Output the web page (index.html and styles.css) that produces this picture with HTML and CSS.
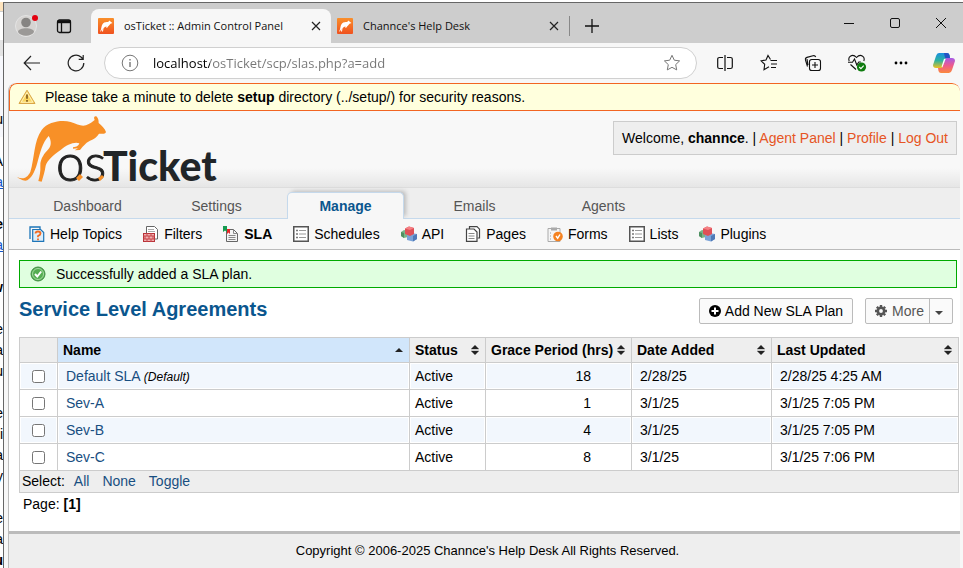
FILE: index.html
```html
<!DOCTYPE html>
<html lang="en">
<head>
<meta charset="utf-8">
<title>osTicket :: Admin Control Panel</title>
<link rel="stylesheet" href="styles.css">
</head>
<body>
<svg class="defs" aria-hidden="true">
  <defs>
    <linearGradient id="gOrange" x1="0" y1="0" x2="0" y2="1"><stop offset="0" stop-color="#f98f2b"/><stop offset="1" stop-color="#f0521f"/></linearGradient>
    <linearGradient id="gBlue" x1="0" y1="0" x2="0" y2="1"><stop offset="0" stop-color="#1a8fe0"/><stop offset=".5" stop-color="#2bb3a0"/><stop offset="1" stop-color="#f0c020"/></linearGradient>
    <linearGradient id="gPink" x1="0" y1="0" x2="0" y2="1"><stop offset="0" stop-color="#a45be8"/><stop offset=".5" stop-color="#ee5a8c"/><stop offset="1" stop-color="#fb8a3c"/></linearGradient>
    <symbol id="fav" viewBox="0 0 16 16"><rect width="16" height="16" rx="1" fill="url(#gOrange)"/><path d="M2 13.500C3.500 12 3 8 5 5.500 6.500 3.800 8.500 4.200 10 4l1.800-1.600.6 1.200L14.500 5l-2 .8C11.500 7.500 10 8 9.500 9.500L8 9.800l.6-1.300C7 8.500 6 9.500 5.500 10.500L5 13.500H4l.3-3C3.800 12 3.300 13.700 2 13.500z" fill="#fff"/></symbol>
    <symbol id="x" viewBox="0 0 12 12"><path d="M2 2l8 8M10 2l-8 8" fill="none" stroke="#222" stroke-width="1.200"/></symbol>
    <symbol id="list" viewBox="0 0 16 16"><rect x=".75" y=".75" width="14.500" height="14.500" fill="#fff" stroke="#555" stroke-width="1.500"/><path d="M6 4.500h7M6 8h7M6 11.500h7" stroke="#999"/><path d="M3 4.500h2M3 8h2M3 11.500h2" stroke="#777" stroke-width="1.500"/></symbol>
    <symbol id="blocks" viewBox="0 0 16 16"><path d="M0 6l3-2 4 1v6l-4 1-3-2z" fill="#7ab58a"/><path d="M0 6l3 1v5l-3-2z" fill="#4f9062"/><path d="M6 9l4-2 6 1v5l-4 2.500L6 14z" fill="#7ba3d8"/><path d="M12 10l4-2v5l-4 2.500z" fill="#4f7ab8"/><path d="M4 2.500L8 .5l5 1.500v6l-4 2-5-2z" fill="#df5158"/><path d="M4 2.500L8 .5 13 2 9 4z" fill="#f58084"/></symbol>
    <symbol id="sort" viewBox="0 0 8 10"><path d="M4 0l4 4H0zM4 10l4-4H0z" fill="#222"/><path d="M0 5h8" stroke="#aaa"/></symbol>
  </defs>
</svg>
<div class="desktop">
  <aside class="backdrop" aria-hidden="true">
    <p>u</p><p></p><p>A</p><p class="link">a</p><p></p><p class="bold">e</p><p class="link">a</p><p></p><p class="bold">w</p><p></p><p>e</p><p>a</p><p>u</p><p></p><p>e</p><p>i</p><p>a</p><p>y</p><p></p><p>e</p><p>a</p><p class="bold">u</p>
  </aside>
  <div class="window">
    <div class="tabbar">
      <button class="avatar" aria-label="Profile"><svg width="22" height="22" viewBox="0 0 22 22"><circle cx="11" cy="11" r="10.500" fill="#d6d4d2" stroke="#e4e4e4"/><circle cx="11" cy="7.500" r="4.800" fill="#868482"/><path d="M3 17c0-5 16-5 16 0-3 5-13 5-16 0z" fill="#9b9997"/><circle cx="20" cy="3" r="3" fill="#e3000f"/></svg></button>
      <button class="panes" aria-label="Tab actions"><svg width="16" height="16" viewBox="0 0 16 16" fill="none" stroke="#111" stroke-width="1.300"><rect x="1.500" y="2" width="13" height="12.500" rx="2"/><path d="M1.500 3.700h13" stroke-width="3"/><path d="M5.500 4v10"/></svg></button>
      <div class="tab active"><svg class="i16"><use href="#fav"/></svg><span>osTicket :: Admin Control Panel</span><button aria-label="Close tab"><svg width="12" height="12"><use href="#x"/></svg></button></div>
      <div class="tab"><svg class="i16"><use href="#fav"/></svg><span>Channce's Help Desk</span><button aria-label="Close tab"><svg width="12" height="12"><use href="#x"/></svg></button></div>
      <button class="newtab" aria-label="New tab"><svg width="14" height="14"><path d="M7 0v14M0 7h14" stroke="#111" stroke-width="1.300"/></svg></button>
      <div class="wincontrols">
        <button aria-label="Minimize"><svg width="10" height="10"><path d="M0 5.500h10" stroke="#111"/></svg></button>
        <button aria-label="Maximize"><svg width="10" height="10"><rect x=".5" y=".5" width="9" height="9" rx="1.500" fill="none" stroke="#111"/></svg></button>
        <button aria-label="Close"><svg width="12" height="12" viewBox="0 0 12 12"><path d="M1 1l10 10M11 1L1 11" stroke="#111"/></svg></button>
      </div>
    </div>
    <div class="toolbar">
      <button class="navbtn" aria-label="Back"><svg width="18" height="16" viewBox="0 0 18 16" fill="none" stroke="#222" stroke-width="1.200"><path d="M17 8H1.500M8 1L1.200 8 8 15"/></svg></button>
      <button class="navbtn" aria-label="Refresh"><svg width="18" height="18" viewBox="0 0 18 18" fill="none" stroke="#222" stroke-width="1.200"><path d="M16.800 9A7.800 7.800 0 1 1 14 3l2 2M16.200 1v4.300h-4.500"/></svg></button>
      <div class="address">
        <svg width="18" height="18" viewBox="0 0 18 18" fill="none" stroke="#777"><circle cx="9" cy="9" r="7.800"/><path d="M9 8v5M9 5v1.500" stroke-width="1.400"/></svg>
        <input aria-label="Address" value="localhost/osTicket/scp/slas.php?a=add">
        <button aria-label="Add to favorites"><svg width="18" height="18" viewBox="0 0 18 18" fill="none" stroke="#777"><path d="M9 1.300l2.300 4.900 5.300.7-3.900 3.700 1 5.300L9 13.300l-4.700 2.600 1-5.300L1.400 6.900l5.300-.7z"/></svg></button>
      </div>
      <div class="tools">
        <button aria-label="Split screen"><svg width="16" height="16" viewBox="0 0 16 16" fill="none" stroke="#111" stroke-width="1.200"><path d="M6 2.500H2.500Q.7 2.500.7 4v8q0 1.500 1.800 1.500H6M10 2.500h3.500q1.800 0 1.800 1.500v8q0 1.500-1.800 1.500H10M8 0v16"/></svg></button>
        <button aria-label="Favorites"><svg width="18" height="18" viewBox="0 0 18 18" fill="none" stroke="#111" stroke-width="1.100"><path d="M10.500 5.500L8 1.500 6 6l-5 .8 3.700 3.500L4 15.800l5-3M10.500 6.500H17M11 10h6M11 13.500h5"/></svg></button>
        <button aria-label="Collections"><svg width="18" height="18" viewBox="0 0 18 18" fill="none" stroke="#111" stroke-width="1.100"><path d="M3.500 12.500L1.500 6Q1 4 3 3.400L9 1.700q2-.5 2.700 1.300M4 11L3 5"/><rect x="5.500" y="5.500" width="11" height="11" rx="2.300"/><path d="M11 8v6M8 11h6"/></svg></button>
        <button aria-label="Browser essentials"><svg width="20" height="18" viewBox="0 0 20 18" fill="none" stroke="#111" stroke-width="1.100"><path d="M2.200 7C.5 2.500 5.500-.8 9.500 3.500 13.500-.8 18.500 2.500 16.800 7M1 8.200h4.500l2-3.200 2.300 6 2-3h2M3.500 10.500L9 15.500"/><circle cx="14.500" cy="13" r="4.600" fill="#107c10" stroke="none"/><path d="M12.300 13l1.600 1.600 2.800-3" stroke="#fff"/></svg></button>
        <button aria-label="Settings and more"><svg width="14" height="4"><circle cx="2" cy="2" r="1.400"/><circle cx="7" cy="2" r="1.400"/><circle cx="12" cy="2" r="1.400"/></svg></button>
        <button aria-label="Copilot"><svg width="22" height="20" viewBox="0 0 22 20"><path d="M6 0h8q2 0 2.500 2l.5 3h-4L9 15H3q-3 0-3-3L3 3q.8-3 3-3z" fill="url(#gBlue)"/><path d="M16 20H8q-2 0-2.500-2L5 15h4L13 5h6q3 0 3 3l-3 9q-.8 3-3 3z" fill="url(#gPink)"/><path d="M11 0h3q2 0 2.500 2l.5 3h-5z" fill="#2353c4"/><path d="M12.500 6L9.500 14l-1-.2 2.500-8z" fill="#fff"/></svg></button>
      </div>
    </div>
    <div class="page">
      <div class="warning"><svg width="18" height="16" viewBox="0 0 18 16"><path d="M9 1.200L17 14.500H1z" fill="#fbd660" stroke="#d9a648" stroke-linejoin="round"/><path d="M9 3.500L14.800 13.200H3.200z" fill="none" stroke="#fff2bd"/><path d="M9 5.500v4.200M9 11v1.800" stroke="#8a6420" stroke-width="1.800"/></svg><span>Please take a minute to delete <b>setup</b> directory (../setup/) for security reasons.</span></div>
      <header>
        <a href="#" class="logo" aria-label="osTicket"><svg width="204" height="74" viewBox="0 0 204 74">
          <path transform="translate(-16 -3) scale(.3333)" fill="#f89027" d="M54 207C70 214 84 212 94 192 107 150 104 100 128 66 148 40 190 35 215 42c20 6 30 14 46 10 12-4 20-12 26-16-4-8-1-12 5-11 6 5 7 13 7 20 9 7 19 17 22 27-3 8-13 5-21 5-6 10-15 17-27 21l-10 6c-6 6-11 10-20 22l-16 1 10-6-15 1v-4c12-2 16-4 19-12-14-6-38 4-56 20-24 16-40 32-45 47-3 20-7 31-12 48l-10-2c4-14 7-29 6-46-1-20 14-39 24-49 9-10 10-25 1-40-20 22-25 50-34 80-7 26-19 52-36 54-10-1-19-6-25-11z"/>
          <text x="41" y="70" class="os">os</text><text x="88" y="70" class="ticket">Ticket</text>
          <path d="M61 67l4-4 3 3-4 4zM83 67l4-3 2 2-4 4z" fill="#f89027"/></svg></a>
        <p class="welcome">Welcome, <b>channce</b>. | <a href="#">Agent Panel</a> | <a href="#">Profile</a> | <a href="#">Log Out</a></p>
      </header>
      <nav class="main"><a href="#">Dashboard</a><a href="#">Settings</a><a href="#" class="on">Manage</a><a href="#">Emails</a><a href="#">Agents</a></nav>
      <nav class="sub">
        <a href="#"><svg class="i16" viewBox="0 0 16 16"><path d="M1 13V1h10v2" fill="none" stroke="#1d75b8" stroke-width="1.300"/><path d="M3.700 15.300V3.500h8l3 3v8.800z" fill="#dceefb" stroke="#1d75b8" stroke-width="1.200"/><path d="M6.500 7.500q0-2 2.500-2t2.500 2q0 1.500-2.500 2.500v1.200M9 12.500v1.700" fill="none" stroke="#f26a22" stroke-width="1.800"/></svg>Help Topics</a>
        <a href="#"><svg class="i16" viewBox="0 0 16 16"><path d="M3.500 7V.5h8l3 3V13h-4" fill="#fff" stroke="#666"/><path d="M5 3.500h6M5 5.500h7" stroke="#aaa"/><rect x=".5" y="7.500" width="11" height="8" fill="#efb0b0" stroke="#b83238"/><path d="M0 10h12M0 13h12M4 7v3M8 7v3M2 10v3M6 10v3M10 10v3M4 13v3M8 13v3" stroke="#c8454b"/></svg>Filters</a>
        <a href="#" class="on"><svg class="i16" viewBox="0 0 16 16"><path d="M3.500 15.500v-12h7l4 4v8z" fill="#f4f4f4" stroke="#666"/><path d="M10.500 3.500v4h4M5.500 9.500h7M5.500 11.500h7M5.500 13.500h7" fill="none" stroke="#888"/><path d="M0 0h4v6L2 4.500 0 6z" fill="#189b50"/><path d="M4 3h3v5L5.500 6.500 4 8z" fill="#e52729"/></svg>SLA</a>
        <a href="#"><svg class="i16"><use href="#list"/></svg>Schedules</a>
        <a href="#"><svg class="i16"><use href="#blocks"/></svg>API</a>
        <a href="#"><svg class="i16" viewBox="0 0 16 16"><path d="M4.500 3V.7h7.500l2.500 2.500V12h-2" fill="#fff" stroke="#444" stroke-width="1.200"/><path d="M1.500 15.300V3h7.500l3 3v9.300z" fill="#fff" stroke="#444" stroke-width="1.200"/><path d="M3.500 7.500h6M3.500 10h6M3.500 12.500h6" stroke="#888"/></svg>Pages</a>
        <a href="#"><svg class="i16" viewBox="0 0 16 16"><path d="M1 15.500v-13h12v13z" fill="#f5f5f5" stroke="#aaa"/><path d="M4 1.500h6v3H4z" fill="#aaa"/><path d="M3 7h1M3 10h1M3 13h1" stroke="#999"/><circle cx="11" cy="10.500" r="4.800" fill="#f58220"/><path d="M9 10l1.700 2.200L13 8.500" fill="none" stroke="#fff" stroke-width="1.400"/></svg>Forms</a>
        <a href="#"><svg class="i16"><use href="#list"/></svg>Lists</a>
        <a href="#"><svg class="i16"><use href="#blocks"/></svg>Plugins</a>
      </nav>
      <main>
        <div class="notice"><svg width="16" height="16" viewBox="0 0 16 16"><circle cx="8" cy="8" r="7" fill="#55ad52" stroke="#3f8e42"/><circle cx="8" cy="8" r="5.500" fill="none" stroke="#a4dba0"/><path d="M5 8l2.300 2.500L11.200 5.500" fill="none" stroke="#fff" stroke-width="2"/></svg>Successfully added a SLA plan.</div>
        <div class="titlebar">
          <h1>Service Level Agreements</h1>
          <button class="btn"><svg width="12" height="12" viewBox="0 0 12 12"><circle cx="6" cy="6" r="6"/><path d="M6 2.500v7M2.500 6h7" stroke="#fff" stroke-width="2"/></svg>Add New SLA Plan</button>
          <button class="btn more"><svg width="12" height="12" viewBox="0 0 12 12"><circle cx="6" cy="6" r="3.200" fill="none" stroke="#555" stroke-width="2.600"/><path d="M6 0v2M6 10v2M0 6h2M10 6h2M1.800 1.800l1.400 1.400M8.800 8.800l1.400 1.400M10.200 1.800L8.800 3.200M3.200 8.800l-1.400 1.400" stroke="#555" stroke-width="2.400"/></svg>More<span class="caret"><svg width="8" height="4"><path d="M0 0h8L4 4z" fill="#444"/></svg></span></button>
        </div>
        <table>
          <colgroup><col class="c1"><col><col class="c3"><col class="c4"><col class="c5"><col class="c6"></colgroup>
          <thead><tr><th></th>
            <th class="sorted"><div>Name<svg width="8" height="4"><path d="M4 0l4 4H0z" fill="#222"/></svg></div></th>
            <th><div>Status<svg width="8" height="10"><use href="#sort"/></svg></div></th>
            <th><div>Grace Period (hrs)<svg width="8" height="10"><use href="#sort"/></svg></div></th>
            <th><div>Date Added<svg width="8" height="10"><use href="#sort"/></svg></div></th>
            <th><div>Last Updated<svg width="8" height="10"><use href="#sort"/></svg></div></th></tr></thead>
          <tbody>
            <tr><td><input type="checkbox" aria-label="Default SLA"></td><td><a href="#">Default SLA</a> <em>(Default)</em></td><td>Active</td><td>18</td><td>2/28/25</td><td>2/28/25 4:25 AM</td></tr>
            <tr><td><input type="checkbox" aria-label="Sev-A"></td><td><a href="#">Sev-A</a></td><td>Active</td><td>1</td><td>3/1/25</td><td>3/1/25 7:05 PM</td></tr>
            <tr><td><input type="checkbox" aria-label="Sev-B"></td><td><a href="#">Sev-B</a></td><td>Active</td><td>4</td><td>3/1/25</td><td>3/1/25 7:05 PM</td></tr>
            <tr><td><input type="checkbox" aria-label="Sev-C"></td><td><a href="#">Sev-C</a></td><td>Active</td><td>8</td><td>3/1/25</td><td>3/1/25 7:06 PM</td></tr>
          </tbody>
          <tfoot><tr><td colspan="6"><div class="select">Select: <a href="#">All</a><a href="#">None</a><a href="#">Toggle</a></div></td></tr></tfoot>
        </table>
        <p class="pager">Page: <b>[1]</b></p>
      </main>
      <footer>Copyright © 2006-2025 Channce's Help Desk All Rights Reserved.</footer>
    </div>
  </div>
</div>
</body>
</html>
```
FILE: styles.css
```css
* { box-sizing: border-box; }
body { margin: 0; background: #fff; color: #000; font: 14px/18px "Liberation Sans", Arial, sans-serif; overflow: hidden; }
p, h1 { margin: 0; }
a { text-decoration: none; color: #184e81; }
button { border: 0; background: none; padding: 0; font: inherit; color: inherit; display: flex; align-items: center; justify-content: center; }
svg { display: block; flex: none; }
.defs { position: absolute; width: 0; height: 0; }
.i16 { width: 16px; height: 16px; }

.desktop { display: grid; grid-template-columns: 3px minmax(0, 1fr); height: 100vh; padding-top: 2px; }
.backdrop { overflow: hidden; padding-top: 108px; background: linear-gradient(#fde3bd 0 9px, #ccc 9px 10px, #fff 10px 38px, #e4e4e4 38px 54px, #f7f8fc 54px 135px, #fff 135px); }
.backdrop p { height: 21px; display: flex; justify-content: flex-end; }
.backdrop .link { color: #1155cc; text-decoration: underline; }
.backdrop .bold { font-weight: bold; }
.window { display: flex; flex-direction: column; min-width: 0; border: solid #666; border-width: 1px 0 0 1px; background: #f7f7f7; overflow: hidden; }

.tabbar { display: flex; height: 40px; flex: none; background: #cdcdcd; font: 11px/16px "Open Sans", "Noto Sans", sans-serif; color: #111; padding-left: 11px; }
.avatar { width: 22px; margin-right: 19px; padding-top: 6px; }
.avatar svg { overflow: visible; }
.panes { width: 16px; margin-right: 19px; padding-top: 6px; }
.tab { display: flex; align-items: center; gap: 10px; width: 240px; margin-top: 6px; padding: 0 8px 0 7px; }
.tab + .tab { padding-left: 6px; width: 238px; }
.tab span { flex: 1; white-space: nowrap; }
.tab button { width: 14px; height: 20px; }
.tab.active { background: #f7f7f7; border-radius: 8px 8px 0 0; }
.newtab { width: 44px; height: 20px; margin-top: 13px; border-left: 1px solid #888; }
.wincontrols { display: flex; margin-left: auto; margin-right: -1px; }
.wincontrols button { width: 46px; }

.toolbar { display: flex; align-items: center; height: 40px; flex: none; margin-right: -2px; padding-left: 6px; }
.navbtn { width: 44px; height: 30px; }
.address { display: flex; align-items: center; flex: 1; height: 32px; margin-left: 6px; padding: 0 15px 0 16px; gap: 14px; border: 1px solid #d0d0d0; border-radius: 16px; background: #fff; }
.address input { flex: 1; min-width: 0; border: 0; padding: 0; outline: 0; font: 13px/20px "Open Sans", "Noto Sans", sans-serif; color: transparent; background-image: linear-gradient(to right, #000 57px, #767676 57px); background-color: transparent; -webkit-background-clip: text; background-clip: text; }
.tools { display: flex; margin-left: 6px; }
.tools button { width: 44px; height: 30px; }
.tools button:last-child { width: 42px; }

.page { flex: 1; display: flex; flex-direction: column; margin: 0 3px 0 4px; border-left: 1px solid #bbb; border-radius: 8px 8px 0 0; background: #fff; overflow: hidden; }
.warning { display: flex; align-items: center; gap: 9px; height: 28px; flex: none; padding: 0 8px; border: solid #f26522; border-width: 1px 0 1px 1px; border-radius: 8px 8px 0 0; background: #ffffdd; }
header { display: flex; justify-content: space-between; align-items: flex-start; height: 76px; flex: none; padding: 0 3px 0 6px; background: linear-gradient(#f8f8f8 75%, #e6e6e6); }
.logo .os { font: 300 51px Lato, sans-serif; fill: #222; stroke: #222; stroke-width: 1px; }
.logo .ticket { font: 900 41px Lato, sans-serif; fill: #212528; }
.welcome { margin-top: 10px; padding: 7px 8px; border: 1px solid #ccc; background: #eee; line-height: 18px; }
.welcome a { color: #e65524; }

nav { display: flex; flex: none; }
.main { height: 32px; gap: 12px; padding: 4px 20px 0; background: #eee; border-top: 1px solid #ddd; border-bottom: 1px solid #c5d9ec; }
.main a { width: 117px; height: 27px; text-align: center; line-height: 28px; color: #555; }
.main .on { color: #0a568e; font-weight: bold; line-height: 26px; background: #f7f7f7; border: 1px solid #c5d9ec; border-bottom: 0; border-radius: 5px 5px 0 0; box-shadow: 3px -2px 4px -1px #bbb; clip-path: inset(-6px -6px 0 -1px); }
.sub { height: 31px; gap: 21px; padding: 0 20px; background: #f7f7f7; border-bottom: 1px solid #bbb; }
.sub a { display: flex; align-items: center; gap: 5px; color: #000; }
.sub .on { font-weight: bold; }

main { padding: 10px 1px 18px 10px; border-bottom: 3px solid #bbb; }
.notice { display: flex; align-items: center; gap: 10px; height: 28px; margin-right: 2px; padding: 0 10px; border: 1px solid #0a0; background: #e0ffe0; }
.titlebar { display: flex; align-items: center; height: 49px; padding-right: 6px; }
h1 { flex: 1; font-size: 20px; line-height: 24px; color: #0a568e; padding-bottom: 8px; }
.btn { height: 26px; padding: 0 9px; gap: 4px; border: 1px solid #bbb; border-radius: 2px; background: #fafafa; margin-bottom: 4px; }
.more { margin-left: 12px; padding-right: 0; color: #555; gap: 5px; }
.caret { display: flex; align-items: center; height: 24px; padding: 4px 9px 0 5px; border-left: 1px solid #bbb; }

table { width: 100%; table-layout: fixed; border-collapse: collapse; }
.c1 { width: 38px; } .c3 { width: 76px; } .c4 { width: 146px; } .c5 { width: 140px; } .c6 { width: 187px; }
th, td { border: 1px solid #ccc; padding: 0 8px; text-align: left; white-space: nowrap; }
th { height: 25px; padding: 0 6px 0 5px; background: #eee; }
th.sorted { background: #d1e6fb; }
th div { display: flex; align-items: center; justify-content: space-between; }
td { height: 27px; }
tbody tr:nth-child(odd) td { background: #f2f7fd; box-shadow: inset 0 0 0 1px #fff; }
td:nth-child(3) { padding-left: 5px; }
td:nth-child(4) { text-align: right; padding-right: 40px; }
td:first-child { text-align: center; }
td input { display: block; margin: 0 auto; width: 13px; height: 13px; }
em { font-size: 12px; }
tfoot td { height: 22px; padding: 0 2px 2px; background: #eee; }
.select { display: flex; gap: 13px; }
.select a:first-child { margin-left: -4px; }
.pager { padding: 2px 4px 0; }
footer { flex: 1; padding: 8px 0 0 6px; background: #eee; text-align: center; font-size: 13px; }
```
